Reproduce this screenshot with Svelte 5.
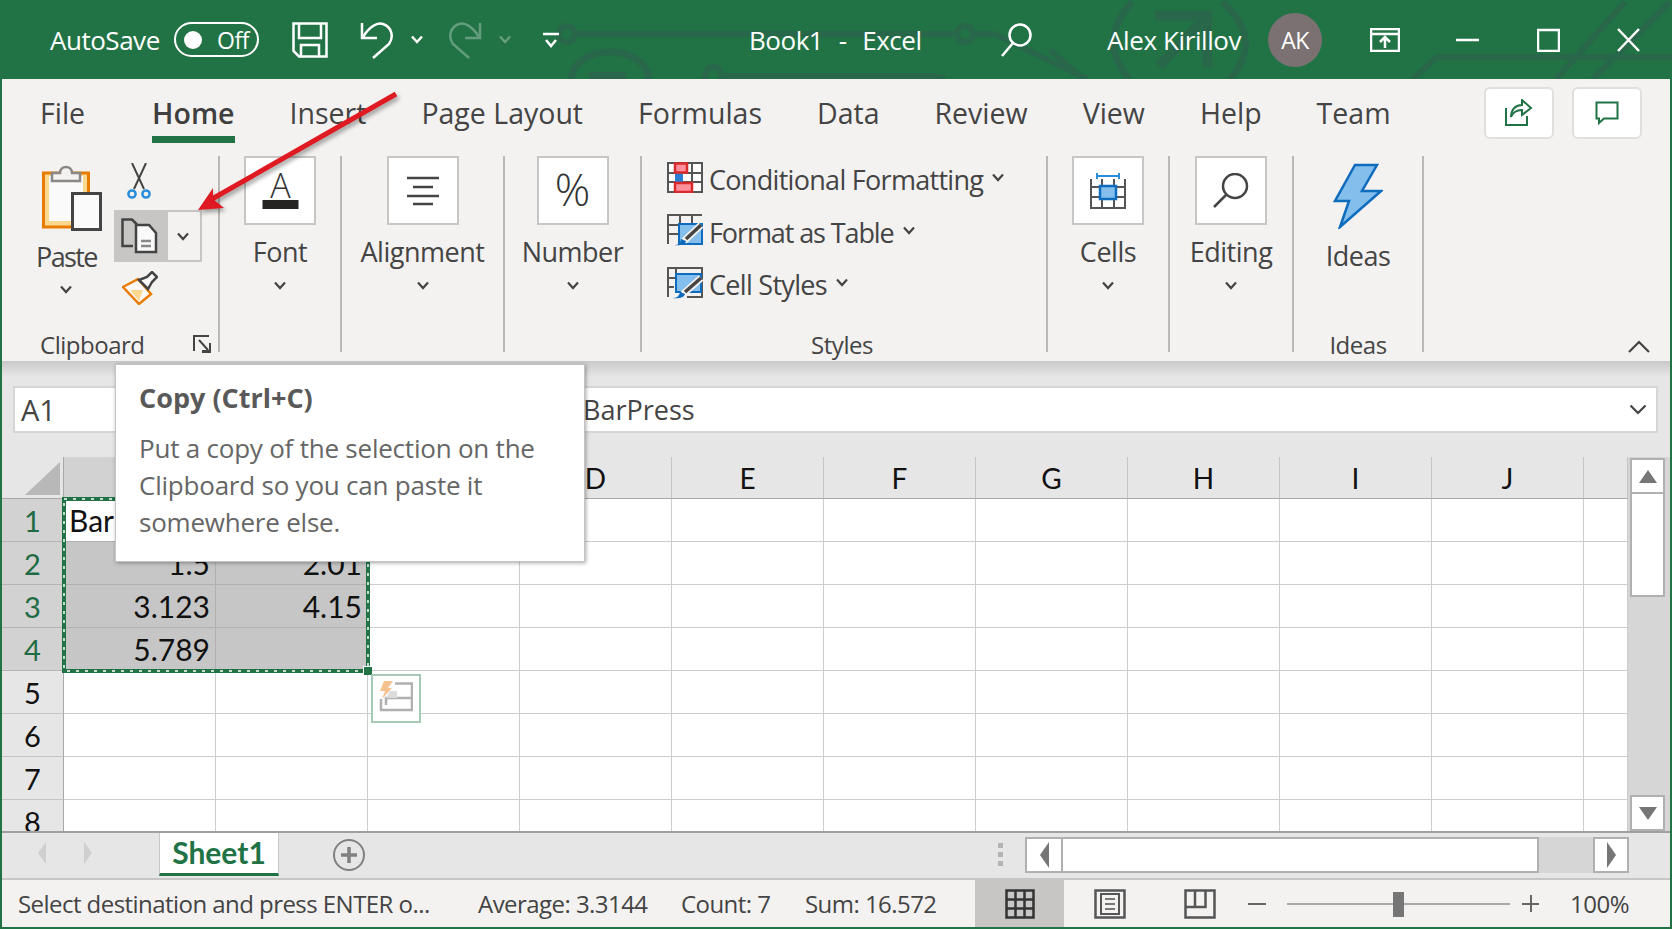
<script>
  const tabs = ['File', 'Home', 'Insert', 'Page Layout', 'Formulas', 'Data', 'Review', 'View', 'Help', 'Team'];
  const columns = ['', '', '', 'D', 'E', 'F', 'G', 'H', 'I', 'J', ''];
  const rows = [1, 2, 3, 4, 5, 6, 7, 8];
  const values = {
    '1-0': { text: 'Bar', left: true },
    '2-0': { text: '1.5' },
    '2-1': { text: '2.01' },
    '3-0': { text: '3.123' },
    '3-1': { text: '4.15' },
    '4-0': { text: '5.789' }
  };

  function isSelected(row, col) {
    return row <= 4 && col <= 1;
  }
</script>

{#snippet chev()}
  <svg class="chev" width="14" height="9" viewBox="0 0 14 9"><path d="M2 1.5 7 7l5-5.5" /></svg>
{/snippet}

<div class="window">
  <header class="titlebar">
    <svg class="circuit" width="1672" height="79" viewBox="0 0 1672 79">
      <g fill="none" stroke="#28674a" stroke-width="6">
        <circle cx="567" cy="34" r="8" />
        <circle cx="965" cy="34" r="8" />
        <path d="M575 34H957M973 34h22l92 45" />
        <path d="M571 79c4-36 74-36 78 0" stroke-width="7" />
        <path d="M589 75.5h37" stroke-width="7" />
        <path d="M705 79c0-16 16-16 16-3H935l10 3" />
        <path d="M1132 2c-24 26-24 52-3 77M1222 2c30 26 30 52 8 77" stroke-width="7" />
        <path d="M1155 15.5h52v52M1205 18l-46 48" stroke-width="10" />
        <path d="M1050 50l33 29M1413 79l24-22h235M1556 79l69-77M1593 79l77-77" />
      </g>
    </svg>
    <div class="qat">
      <span class="autosave">AutoSave</span>
      <span class="toggle"><i></i><b>Off</b></span>
      <svg class="save" width="36" height="36" viewBox="0 0 36 36">
        <path d="M1.5 1.5h33v33H7L1.5 29ZM7 2v14h22V2M9 34V23h18v11" />
      </svg>
      <svg class="undo" width="34" height="38" viewBox="0 0 34 38">
        <path d="M2 2v15h15M3 16C9 6 17 1 23 3c9 3 11 13 6 20L13 37" />
      </svg>
      <span class="qat-chev">{@render chev()}</span>
      <svg class="redo" width="34" height="38" viewBox="0 0 34 38">
        <path d="M32 2v15H17M31 16C25 6 17 1 11 3 2 6 0 16 5 23l16 14" />
      </svg>
      <span class="qat-chev dim">{@render chev()}</span>
      <svg class="custom" width="18" height="16" viewBox="0 0 18 16">
        <path d="M1 2h16M4 8l5 6 5-6" />
      </svg>
    </div>
    <span class="doc">Book1  -  Excel</span>
    <svg class="search" width="32" height="34" viewBox="0 0 32 34">
      <circle cx="20" cy="12" r="10.5" /><path d="M13 20 2 33" />
    </svg>
    <span class="user">Alex Kirillov</span>
    <span class="avatar">AK</span>
    <svg class="display" width="30" height="24" viewBox="0 0 30 24">
      <path d="M1 1h28v22H1ZM1 6h28M15 20V9M10 14l5-5 5 5" />
    </svg>
    <svg class="win min" width="23" height="24" viewBox="0 0 23 24"><path d="M0 12h23" /></svg>
    <svg class="win max" width="23" height="24" viewBox="0 0 23 24"><path d="M1 2h21v21H1Z" /></svg>
    <svg class="win close" width="23" height="24" viewBox="0 0 23 24"><path d="M1 1l21 22M22 1 1 23" /></svg>
  </header>

  <div class="body">
    <section class="ribbon">
      <nav class="tabs">
        {#each tabs as tab}
          <span class="tab" class:active={tab === 'Home'} class:first={tab === 'File'}>{tab}</span>
        {/each}
        <div class="actions">
          <button class="action" aria-label="Share">
            <svg width="28" height="28" viewBox="0 0 28 28">
              <path d="M1 9v17h21v-9M6 18c0-8 5-12 11-12V1l9 8-9 7v-5c-5 0-9 2-11 7Z" />
            </svg>
          </button>
          <button class="action" aria-label="Comments">
            <svg width="24" height="24" viewBox="0 0 24 24">
              <path d="M1.5 1.5h21v16H9l-5 4.500v-4.500H1.500Z" />
            </svg>
          </button>
        </div>
      </nav>

      <div class="groups">
        <div class="group clipboard">
          <div class="clip-row">
            <div class="paste">
              <svg width="60" height="67" viewBox="0 0 60 67">
                <rect x="1.5" y="9" width="45" height="54" fill="#fcd88f" stroke="#e97c00" stroke-width="3" />
                <rect x="7" y="12" width="34" height="45" fill="#fafafa" />
                <path d="M10 17V9h8c0-8 12-8 12 0h8v8Z" fill="#f3f2f1" stroke="#8a8886" stroke-width="2.5" />
                <rect x="30.5" y="29.5" width="28" height="36" fill="#fafafa" stroke="#444" stroke-width="3" />
              </svg>
              <span class="label">Paste</span>
              <span class="paste-chev">{@render chev()}</span>
            </div>
            <div class="small">
              <svg class="scissors" width="24" height="36" viewBox="0 0 24 36">
                <path d="M5 0 17 26M19 0 7 26" stroke="#444" stroke-width="2" fill="none" />
                <circle cx="5" cy="31" r="3.6" fill="none" stroke="#2b8ed8" stroke-width="2.5" />
                <circle cx="19" cy="31" r="3.6" fill="none" stroke="#2b8ed8" stroke-width="2.5" />
              </svg>
              <div class="split">
                <span class="split-main">
                  <svg width="37" height="36" viewBox="0 0 37 36">
                    <path d="M12 28H1.5V1.5H11l5 5" fill="none" stroke="#444" stroke-width="2.5" />
                    <path d="M15 7h13l7 8v19H15Z" fill="#fafafa" stroke="#444" stroke-width="2.5" />
                    <path d="M20 23h10M20 28h10" stroke="#8a8886" stroke-width="2.5" />
                  </svg>
                </span>
                <span class="split-more">{@render chev()}</span>
              </div>
              <svg class="painter" width="36" height="34" viewBox="0 0 36 34">
                <path d="M1 16 16 8l13 15-12 10Z" fill="#fafafa" stroke="#e97c00" stroke-width="2.5" />
                <path d="M8 19h13l-4 11Z" fill="#fcd88f" />
                <path d="M17 9l9 9 4-7 5-5-5-5-5 5Z" fill="#fafafa" stroke="#444" stroke-width="2.5" />
              </svg>
            </div>
          </div>
          <div class="footer">
            <span>Clipboard</span>
            <svg class="launcher" width="19" height="18" viewBox="0 0 19 18">
              <path d="M1 16V1h15M6 5l9 10M9 16h8V8M18 17h-9" fill="none" stroke="#444" stroke-width="2" />
            </svg>
          </div>
        </div>

        <div class="group big w-font">
          <span class="box">
            <svg width="67" height="64" viewBox="0 0 67 64">
              <text x="33.5" y="39" text-anchor="middle" class="glyph" font-size="34">A</text>
              <rect x="15.5" y="41" width="36" height="9" fill="#252423" />
            </svg>
          </span>
          <span class="label">Font</span>
          <span class="more">{@render chev()}</span>
        </div>

        <div class="group big w-align">
          <span class="box">
            <svg width="32" height="30" viewBox="0 0 32 30">
              <path d="M0 2h32M6 11h20M0 20h32M6 28h20" stroke="#444" stroke-width="2.5" />
            </svg>
          </span>
          <span class="label">Alignment</span>
          <span class="more">{@render chev()}</span>
        </div>

        <div class="group big w-number">
          <span class="box">
            <svg width="67" height="64" viewBox="0 0 67 64">
              <text x="33.5" y="47" text-anchor="middle" class="glyph" font-size="44">%</text>
            </svg>
          </span>
          <span class="label">Number</span>
          <span class="more">{@render chev()}</span>
        </div>

        <div class="group w-styles">
          <div class="style-row">
            <svg width="36" height="31" viewBox="0 0 36 31">
              <path d="M1 1h34v29H1ZM1 11h34M1 20h34M13 1v29M25 1v29" fill="#fff" stroke="#555" stroke-width="2" />
              <rect x="8" y="11" width="8" height="9" fill="#2b7cd3" />
              <rect x="8" y="1.5" width="12" height="9" fill="#ff8f9b" stroke="#d92b2b" stroke-width="2.5" />
              <rect x="8" y="21" width="17" height="9" fill="#ff8f9b" stroke="#d92b2b" stroke-width="2.5" />
            </svg>
            <span>Conditional Formatting</span>
            {@render chev()}
          </div>
          <div class="style-row tight">
            <svg width="36" height="32" viewBox="0 0 36 32">
              <path d="M1 30V1h34M1 11h34M1 20h10M13 1v20M25 1v10" fill="none" stroke="#555" stroke-width="2" />
              <rect x="12" y="10" width="23" height="20" fill="#83beec" stroke="#0f6cbd" stroke-width="2" />
              <path d="M34 11 17 27" stroke="#f3f2f1" stroke-width="7" />
              <path d="M34 11 19 25" stroke="#444" stroke-width="3.5" />
              <path d="M7 31c4 0 6-1 7-6l5 2c-1 4-6 5-12 4Z" fill="#0f6cbd" />
            </svg>
            <span>Format as Table</span>
            {@render chev()}
          </div>
          <div class="style-row">
            <svg width="36" height="32" viewBox="0 0 36 32">
              <path d="M1 30V1h34v29H20M1 11h9M1 20h6M9 1v20" fill="none" stroke="#555" stroke-width="2" />
              <rect x="9" y="7" width="25" height="18" fill="#83beec" stroke="#0f6cbd" stroke-width="2" />
              <path d="M34 11 16 27" stroke="#f3f2f1" stroke-width="7" />
              <path d="M34 11 18 25" stroke="#444" stroke-width="3.5" />
              <path d="M5 31c4 0 7-1 8-6l5 2c-1 4-7 5-13 4Z" fill="#0f6cbd" />
            </svg>
            <span>Cell Styles</span>
            {@render chev()}
          </div>
          <div class="footer center">Styles</div>
        </div>

        <div class="group big w-cells">
          <span class="box">
            <svg width="36" height="36" viewBox="0 0 36 36">
              <path d="M7 3h22M7 0v6M29 0v6" stroke="#2b8ed8" stroke-width="2" />
              <path d="M1 6v29h34V6M1 14h34M1 24h34M12 6v29M24 6v29" fill="none" stroke="#555" stroke-width="2" />
              <rect x="10" y="13" width="16" height="13" fill="#83beec" stroke="#0f6cbd" stroke-width="2.5" />
            </svg>
          </span>
          <span class="label">Cells</span>
          <span class="more">{@render chev()}</span>
        </div>

        <div class="group big w-edit">
          <span class="box">
            <svg width="36" height="36" viewBox="0 0 36 36">
              <circle cx="22" cy="13" r="12" fill="none" stroke="#444" stroke-width="2.5" />
              <path d="M13 22 1 34" stroke="#444" stroke-width="2.5" />
            </svg>
          </span>
          <span class="label">Editing</span>
          <span class="more">{@render chev()}</span>
        </div>

        <div class="group big w-ideas">
          <svg class="bolt" width="50" height="66" viewBox="0 0 50 66">
            <path d="M22 2h22L29 28h19L7 64l9-26H2Z" fill="#83beec" stroke="#0f6cbd" stroke-width="2.5" />
          </svg>
          <span class="label">Ideas</span>
          <div class="footer center">Ideas</div>
        </div>

        <svg class="collapse" width="22" height="13" viewBox="0 0 22 13"><path d="M1 12 11 2l10 10" /></svg>
      </div>
    </section>

    <section class="formula">
      <div class="namebox">A1</div>
      <div class="fx">
        <span>BarPress</span>
        <svg class="fx-chev" width="18" height="11" viewBox="0 0 18 11"><path d="M1.5 1.5 9 9l7.5-7.5" /></svg>
      </div>
    </section>

    <section class="sheet-row">
      <div class="sheet">
        <div class="cell corner"><i></i></div>
        {#each columns as col, c}
          <div class="cell colhead" class:sel={c <= 1}>{col}</div>
        {/each}
        {#each rows as row}
          <div class="cell rowhead" class:sel={row <= 4}>{row}</div>
          {#each columns as _, c}
            {@const v = values[row + '-' + c]}
            <div class="cell data" class:picked={isSelected(row, c)} class:active={row === 1 && c === 0} class:left={v?.left}>{v?.text ?? ''}</div>
          {/each}
        {/each}
        <div class="marquee">
          <svg width="308" height="176" viewBox="0 0 308 176">
            <rect x="2" y="2" width="304" height="172" fill="none" stroke="#fff" stroke-width="1.5" stroke-dasharray="3 6" />
          </svg>
        </div>
        <div class="handle"></div>
        <div class="paste-options">
          <svg width="34" height="36" viewBox="0 0 34 36">
            <path d="M16 2.5H33V29H2V18" fill="none" stroke="#b0b0b0" stroke-width="2.5" />
            <path d="M7 24V17H33" fill="none" stroke="#b0b0b0" stroke-width="2.5" />
            <path d="M7 17l4-7h7v7Z" fill="#dcdcdc" />
            <path d="M5 0h9L9 7h4L3 18l3-8H1Z" fill="#f4c28f" />
          </svg>
        </div>
      </div>
      <aside class="vscroll">
        <span class="vbtn"><i class="tri up"></i></span>
        <span class="vthumb"></span>
        <span class="vbtn end"><i class="tri down"></i></span>
      </aside>
    </section>

    <section class="sheetbar">
      <i class="tri left dim nav1"></i>
      <i class="tri right dim nav2"></i>
      <span class="sheet-tab">Sheet1</span>
      <svg class="add" width="34" height="34" viewBox="0 0 34 34">
        <circle cx="17" cy="17" r="15" fill="none" stroke="#808080" stroke-width="2" />
        <path d="M17 9v16M9 17h16" stroke="#808080" stroke-width="3.5" />
      </svg>
      <span class="grip"><i></i><i></i><i></i></span>
      <div class="hscroll">
        <span class="hbtn"><i class="tri left"></i></span>
        <span class="hthumb"></span>
        <span class="hbtn end"><i class="tri right"></i></span>
      </div>
    </section>

    <footer class="status">
      <span class="msg">Select destination and press ENTER o...</span>
      <span class="avg">Average: 3.3144</span>
      <span class="count">Count: 7</span>
      <span class="sum">Sum: 16.572</span>
      <span class="view on">
        <svg width="30" height="30" viewBox="0 0 30 30">
          <path d="M1.5 1.5h27v27h-27ZM1.5 10.5h27M1.5 19.5h27M10.5 1.5v27M19.5 1.5v27" fill="none" stroke="#333" stroke-width="2.5" />
        </svg>
      </span>
      <span class="view">
        <svg width="32" height="30" viewBox="0 0 32 30">
          <path d="M1.5 1.5h29v27h-29Z" fill="none" stroke="#555" stroke-width="2.5" />
          <rect x="7" y="5" width="18" height="20" fill="none" stroke="#555" stroke-width="2" />
          <path d="M11 10h10M11 15h10M11 20h10" stroke="#777" stroke-width="2" />
        </svg>
      </span>
      <span class="view">
        <svg width="32" height="30" viewBox="0 0 32 30">
          <path d="M1.5 1.5h29v27h-29ZM1.5 18h20V1.5M11 1.5V18" fill="none" stroke="#555" stroke-width="2.5" />
        </svg>
      </span>
      <span class="minus"></span>
      <span class="slider"><i></i></span>
      <span class="plus"></span>
      <span class="zoom">100%</span>
    </footer>
  </div>

  <div class="tooltip">
    <h4>Copy (Ctrl+C)</h4>
    <p>Put a copy of the selection on the<br />Clipboard so you can paste it<br />somewhere else.</p>
  </div>

  <svg class="arrow" width="240" height="130" viewBox="190 90 240 130">
    <path d="M396 94 212 199" stroke="#e01a22" stroke-width="5" />
    <path d="M198 210 213 188 213 199 224 208Z" fill="#e01a22" />
  </svg>
</div>

<style>
  :global(body) {
    margin: 0;
    background: #217346;
  }

  .window {
    position: relative;
    width: 1672px;
    height: 929px;
    overflow: hidden;
    display: flex;
    flex-direction: column;
    font-family: "Open Sans", "Noto Sans", sans-serif;
    color: #444;
    letter-spacing: -0.03em;
  }

  /* title bar */
  .titlebar {
    position: relative;
    height: 79px;
    flex: none;
    display: flex;
    align-items: center;
    background: #217346;
    color: #fff;
    font-size: 26px;
  }
  .titlebar > *:not(.circuit) {
    position: relative;
  }
  .circuit {
    position: absolute;
    inset: 0;
  }
  .titlebar svg:not(.circuit) path,
  .titlebar svg:not(.circuit) circle {
    fill: none;
    stroke: #fff;
    stroke-width: 2.5;
  }
  .qat {
    width: 699px;
    margin-left: 50px;
    display: flex;
    align-items: center;
  }
  .autosave {
    width: 110px;
    white-space: nowrap;
  }
  .toggle {
    width: 85px;
    height: 35px;
    margin-left: 14px;
    box-sizing: border-box;
    border: 2.5px solid #fff;
    border-radius: 18px;
    display: flex;
    align-items: center;
    font-size: 23px;
  }
  .toggle i {
    width: 18px;
    height: 18px;
    margin-left: 8px;
    border-radius: 50%;
    background: #fff;
  }
  .toggle b {
    font-weight: 400;
    margin-left: 15px;
  }
  .save {
    margin-left: 33px;
  }
  .undo {
    margin-left: 32px;
  }
  .redo {
    margin-left: 24px;
    opacity: 0.3;
  }
  .qat-chev {
    margin-left: 16px;
    display: flex;
  }
  .qat-chev.dim {
    opacity: 0.3;
  }
  .custom {
    margin-left: 30px;
  }
  .doc {
    width: 251px;
    white-space: pre;
    word-spacing: 1.5px;
  }
  .user {
    margin-left: 75px;
    white-space: nowrap;
    flex: none;
    width: 161px;
    letter-spacing: -0.4px;
  }
  .avatar {
    width: 54px;
    height: 54px;
    border-radius: 50%;
    background: #7b7173;
    display: flex;
    align-items: center;
    justify-content: center;
    font-size: 23px;
  }
  .display {
    margin-left: 48px;
  }
  .min {
    margin-left: 56px;
  }
  .max {
    margin-left: 58px;
  }
  .close {
    margin-left: 57px;
  }

  /* everything under the title bar sits in the thin green frame */
  .body {
    flex: 1;
    min-height: 0;
    display: flex;
    flex-direction: column;
    border: 2px solid #217346;
    border-top: 0;
    background: #f3f2f1;
  }

  .ribbon {
    height: 282px;
    flex: none;
    background: #f3f2f1;
  }
  .tabs {
    height: 77px;
    display: flex;
    padding-left: 38px;
    font-size: 28.5px;
    letter-spacing: 0;
    box-sizing: border-box;
  }
  .tab {
    height: 48px;
    margin-top: 16px;
    margin-right: 55px;
    line-height: 36px;
    box-sizing: border-box;
    border-bottom: 7px solid transparent;
    white-space: nowrap;
  }
  .tab.first {
    margin-right: 67px;
  }
  .tab.active {
    font-weight: 600;
    border-bottom-color: #217346;
    color: #3f3f3f;
  }
  .actions {
    margin-left: auto;
    margin-right: 28px;
    margin-top: 8px;
    display: flex;
    gap: 18px;
  }
  .action {
    width: 70px;
    height: 52px;
    padding: 0;
    background: #fff;
    border: 2px solid #e1dfdd;
    border-radius: 6px;
    display: flex;
    align-items: center;
    justify-content: center;
  }
  .action svg path {
    fill: none;
    stroke: #217346;
    stroke-width: 2;
  }

  .groups {
    position: relative;
    display: flex;
    height: 196px;
  }
  .group {
    box-sizing: border-box;
    height: 196px;
    border-right: 2px solid #b9b8b7;
    display: flex;
    flex-direction: column;
    font-size: 27px;
  }
  .clipboard {
    width: 218px;
    padding-top: 7px;
  }
  .w-font { width: 122px; }
  .w-align { width: 163px; }
  .w-number { width: 137px; }
  .w-styles { width: 406px; padding: 6px 0 0 25px; }
  .w-cells { width: 122px; }
  .w-edit { width: 124px; }
  .w-ideas { width: 130px; }

  .big {
    align-items: center;
  }
  .label {
    line-height: 30px;
    white-space: nowrap;
  }
  .box {
    width: 72px;
    height: 69px;
    flex: none;
    box-sizing: border-box;
    background: #fff;
    border: 2.5px solid #c8c6c4;
    display: flex;
    align-items: center;
    justify-content: center;
  }
  .box + .label {
    margin-top: 12px;
  }
  .more {
    display: flex;
    margin-top: 14px;
  }
  .chev {
    flex: none;
  }
  .chev path,
  .fx-chev path {
    fill: none;
    stroke: #444;
    stroke-width: 2.2;
  }
  .glyph {
    font-family: "Open Sans", sans-serif;
    font-weight: 300;
    fill: #333;
    letter-spacing: 0;
  }

  .clip-row {
    display: flex;
    margin-left: 35px;
  }
  .paste {
    width: 65px;
    display: flex;
    flex-direction: column;
    padding-top: 1px;
  }
  .paste svg:first-child {
    margin-left: 5px;
  }
  .paste .label {
    margin: 11px 0 0 -1px;
    letter-spacing: -1.6px;
  }
  .paste-chev {
    display: flex;
    margin: 13px 0 0 17px;
  }
  .small {
    width: 88px;
    margin-left: 12px;
    display: flex;
    flex-direction: column;
  }
  .scissors {
    margin-left: 13px;
  }
  .split {
    display: flex;
    height: 52px;
    margin-top: 11px;
  }
  .split-main {
    width: 54px;
    background: #c8c6c4;
    display: flex;
    align-items: center;
    padding-left: 7px;
    box-sizing: border-box;
  }
  .split-more {
    flex: 1;
    box-sizing: border-box;
    border: 2px solid #c8c6c4;
    border-left: 0;
    padding-right: 3px;
    display: flex;
    align-items: center;
    justify-content: center;
  }
  .painter {
    margin: 9px 0 0 8px;
  }

  .footer {
    margin-top: auto;
    margin-bottom: -5px;
    height: 24px;
    line-height: 24px;
    font-size: 24px;
    display: flex;
    align-items: center;
    justify-content: space-between;
    padding: 0 6px 0 38px;
  }
  .footer.center {
    justify-content: center;
    padding: 0;
    align-self: stretch;
  }
  .w-styles .footer {
    margin-left: -29px;
  }
  .launcher {
    margin-top: -3px;
  }

  .style-row {
    display: flex;
    align-items: center;
    gap: 6px;
    height: 31px;
    margin-bottom: 21.5px;
    white-space: nowrap;
    font-size: 27px;
    letter-spacing: -0.7px;
  }
  .style-row.tight {
    letter-spacing: -1.1px;
  }
  .style-row span {
    margin-top: 4px;
  }
  .style-row .chev {
    margin: 0 0 0 2px;
  }

  .bolt {
    margin-top: 7px;
  }
  .bolt + .label {
    margin-top: 12px;
  }
  .collapse {
    position: absolute;
    right: 20px;
    bottom: -1px;
  }
  .collapse path {
    fill: none;
    stroke: #444;
    stroke-width: 2.2;
  }

  /* formula bar */
  .formula {
    height: 96px;
    flex: none;
    box-sizing: border-box;
    display: flex;
    padding: 25px 12px 0 11px;
    gap: 16px;
    background: linear-gradient(#c9c9c9, #e6e6e6 16px);
  }
  .namebox,
  .fx {
    height: 47px;
    box-sizing: border-box;
    background: #fff;
    border: 2px solid #d8d6d4;
    display: flex;
    align-items: center;
    font-size: 27px;
    letter-spacing: 0;
  }
  .namebox {
    width: 200px;
    padding-left: 6px;
    font-size: 29px;
  }
  .fx {
    flex: 1;
    padding: 0 9px 0 352px;
    justify-content: space-between;
  }

  /* sheet */
  .sheet-row {
    display: flex;
    height: 374px;
    flex: none;
    background: #d6d6d6;
  }
  .sheet {
    position: relative;
    width: 1626px;
    height: 374px;
    overflow: hidden;
    background: #fff;
    display: grid;
    grid-template-columns: 62px repeat(10, 152px) 44px;
    grid-template-rows: 42px repeat(8, 43px);
    font-family: Lato, "Liberation Sans", sans-serif;
    font-size: 30px;
    letter-spacing: 0;
    color: #111;
  }
  .cell {
    box-sizing: border-box;
    border-right: 1px solid #cdcdcd;
    border-bottom: 1px solid #cdcdcd;
    display: flex;
    align-items: center;
    justify-content: center;
    min-width: 0;
    overflow: hidden;
    white-space: nowrap;
  }
  .corner {
    position: relative;
    background: #e6e6e6;
    border-color: #a8a8a8;
  }
  .corner i {
    position: absolute;
    right: 3px;
    bottom: 3px;
    width: 35px;
    height: 33px;
    background: #b8b8b8;
    clip-path: polygon(100% 0, 100% 100%, 0 100%);
  }
  .colhead {
    background: #e6e6e6;
    border-right-color: #c4c4c4;
    border-bottom-color: #a8a8a8;
    font-size: 28px;
  }
  .rowhead {
    background: #e6e6e6;
    border-right-color: #a8a8a8;
    border-bottom-color: #c4c4c4;
    font-size: 29px;
  }
  .colhead.sel,
  .rowhead.sel {
    background: #d2d2d2;
    border-color: #b4b4b4;
    color: #1f6b43;
  }
  .data {
    justify-content: flex-end;
    padding-right: 5px;
  }
  .data.picked {
    background: #c6c6c6;
    border-color: #b0b0b0;
  }
  .data.active {
    background: #fff;
  }
  .data.left {
    justify-content: flex-start;
    padding-left: 5px;
  }
  .marquee {
    position: absolute;
    left: 60px;
    top: 40px;
    width: 308px;
    height: 176px;
    box-sizing: border-box;
    border: 4px solid #217346;
  }
  .marquee svg {
    position: absolute;
    left: -4px;
    top: -4px;
  }
  .handle {
    position: absolute;
    left: 361px;
    top: 209px;
    width: 8px;
    height: 8px;
    background: #217346;
    border-left: 1px solid #fff;
    border-top: 1px solid #fff;
  }
  .paste-options {
    position: absolute;
    left: 369px;
    top: 217px;
    width: 50px;
    height: 49px;
    box-sizing: border-box;
    border: 2px solid #a6c9b8;
    display: flex;
    align-items: center;
    justify-content: center;
    background: #fff;
  }

  .vscroll {
    width: 40px;
    display: flex;
    flex-direction: column;
    align-items: center;
    padding: 1px 4px 0 3px;
    box-sizing: border-box;
  }
  .vbtn,
  .hbtn {
    box-sizing: border-box;
    background: #fff;
    border: 2px solid #b0b0b0;
    display: flex;
    align-items: center;
    justify-content: center;
    flex: none;
  }
  .vbtn {
    width: 35px;
    height: 36px;
  }
  .vbtn.end {
    margin-top: auto;
  }
  .vthumb {
    width: 35px;
    height: 103px;
    box-sizing: border-box;
    background: #fff;
    border: 2px solid #b0b0b0;
    border-top: 0;
  }
  .tri {
    display: block;
    width: 0;
    height: 0;
    border: 0 solid transparent;
  }
  .tri.up {
    border-width: 0 9px 13px;
    border-bottom-color: #767676;
  }
  .tri.down {
    border-width: 13px 9px 0;
    border-top-color: #767676;
  }
  .tri.left {
    border-width: 13px 9px 13px 0;
    border-right-color: #767676;
  }
  .tri.right {
    border-width: 13px 0 13px 9px;
    border-left-color: #767676;
  }
  .tri.dim.left {
    border-width: 11px 8px 11px 0;
    border-right-color: #cfcfcf;
  }
  .tri.dim.right {
    border-width: 11px 0 11px 8px;
    border-left-color: #cfcfcf;
  }

  /* sheet tabs */
  .sheetbar {
    height: 47px;
    flex: none;
    box-sizing: border-box;
    border-top: 2px solid #a0a0a0;
    background: #e6e6e6;
    display: flex;
    align-items: flex-start;
    position: relative;
  }
  .nav1 {
    margin: 9px 0 0 36px;
  }
  .nav2 {
    margin: 9px 0 0 38px;
  }
  .sheet-tab {
    margin-left: 67px;
    width: 120px;
    height: 43px;
    box-sizing: border-box;
    background: #fff;
    border: 1px solid #c8c8c8;
    border-top: 0;
    border-bottom: 3px solid #217346;
    color: #217346;
    font-family: Lato, sans-serif;
    font-weight: 700;
    font-size: 30px;
    letter-spacing: 0;
    text-align: center;
    line-height: 38px;
  }
  .add {
    margin: 5px 0 0 53px;
  }
  .grip {
    margin: 10px 0 0 632px;
    display: flex;
    flex-direction: column;
    gap: 4px;
  }
  .grip i {
    width: 5px;
    height: 5px;
    background: #b4b4b4;
  }
  .hscroll {
    margin: 4px 0 0 22px;
    width: 604px;
    height: 36px;
    display: flex;
    background: #d6d6d6;
  }
  .hbtn {
    width: 38px;
    height: 36px;
  }
  .hbtn.end {
    margin-left: auto;
    width: 36px;
  }
  .hthumb {
    width: 476px;
    box-sizing: border-box;
    background: #fff;
    border: 2px solid #b0b0b0;
    border-left: 0;
  }

  /* status bar */
  .status {
    flex: 1;
    min-height: 0;
    box-sizing: border-box;
    border-top: 2px solid #c8c6c4;
    display: flex;
    align-items: center;
    font-size: 24px;
    letter-spacing: -0.55px;
    white-space: nowrap;
  }
  .msg { margin-left: 16px; width: 460px; flex: none; }
  .avg { width: 203px; flex: none; }
  .count { width: 124px; flex: none; }
  .sum { width: 170px; flex: none; }
  .view {
    align-self: stretch;
    width: 89px;
    flex: none;
    display: flex;
    align-items: center;
    justify-content: center;
    margin-right: 1px;
  }
  .view.on {
    background: #c8c6c4;
  }
  .minus {
    width: 18px;
    height: 2px;
    margin-left: 3px;
    background: #666;
  }
  .slider {
    position: relative;
    width: 223px;
    height: 2px;
    margin-left: 21px;
    background: #a8a8a8;
  }
  .slider i {
    position: absolute;
    left: 106px;
    top: -11px;
    width: 11px;
    height: 25px;
    background: #767676;
  }
  .plus {
    position: relative;
    width: 17px;
    height: 2px;
    margin-left: 12px;
    background: #666;
  }
  .plus::after {
    content: "";
    position: absolute;
    left: 7.5px;
    top: -7.5px;
    width: 2px;
    height: 17px;
    background: #666;
  }
  .zoom {
    margin-left: 31px;
    letter-spacing: -0.5px;
  }

  /* overlays */
  .tooltip {
    position: absolute;
    left: 115px;
    top: 364px;
    width: 470px;
    height: 198px;
    box-sizing: border-box;
    padding: 15px 23px;
    background: #fff;
    border: 1px solid #c4c4c4;
    box-shadow: 1px 1px 4px rgba(0, 0, 0, 0.35);
    color: #666;
    font-size: 26px;
    letter-spacing: -0.22px;
  }
  .tooltip h4 {
    margin: 0;
    font-size: 27px;
    line-height: 36px;
    font-weight: 700;
    letter-spacing: 0;
    color: #595959;
  }
  .tooltip p {
    margin: 14px 0 0;
    line-height: 37px;
  }
  .arrow {
    position: absolute;
    left: 190px;
    top: 90px;
    filter: drop-shadow(2px 3px 2px rgba(0, 0, 0, 0.35));
  }
</style>
